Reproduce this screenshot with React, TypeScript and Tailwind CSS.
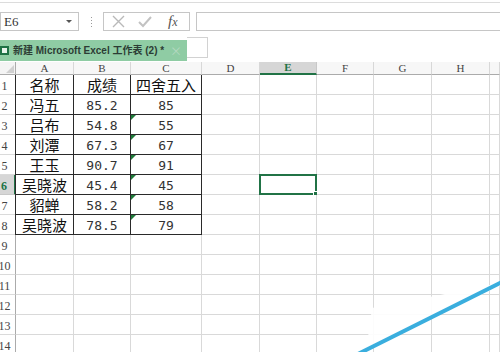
import React from 'react';

const letters = ['A', 'B', 'C', 'D', 'E', 'F', 'G', 'H', ''];

const data: string[][] = [
  ['名称', '成绩', '四舍五入'],
  ['冯五', '85.2', '85'],
  ['吕布', '54.8', '55'],
  ['刘潭', '67.3', '67'],
  ['王玉', '90.7', '91'],
  ['吴晓波', '45.4', '45'],
  ['貂蝉', '58.2', '58'],
  ['吴晓波', '78.5', '79'],
];

const cjk = { fontFamily: '"Noto Sans CJK SC", sans-serif' };
const mono = { fontFamily: '"DejaVu Sans Mono", monospace' };
const serif = { fontFamily: '"Liberation Serif", serif' };

const FormulaBar: React.FC = () => (
  <div className="flex items-stretch h-[19px]">
    <div className="w-[79px] border border-[#c6c6c6] flex items-center justify-between pl-[3px] pr-[6px] text-[13px] text-[#333]" style={serif}>
      <span>E6</span>
      <span className="w-0 h-0 border-l-[3px] border-r-[3px] border-t-[3px] border-l-transparent border-r-transparent border-t-[#555]" />
    </div>
    <div className="w-[24px] flex flex-col items-center justify-center gap-[2px]">
      <span className="w-[1px] h-[1px] bg-[#9a9a9a]" />
      <span className="w-[1px] h-[1px] bg-[#9a9a9a]" />
      <span className="w-[1px] h-[1px] bg-[#9a9a9a]" />
      <span className="w-[1px] h-[1px] bg-[#9a9a9a]" />
    </div>
    <div className="w-[87px] border border-[#c6c6c6] flex items-center pl-[8px] gap-[13px]">
      <svg width="13" height="13" viewBox="0 0 13 13">
        <path d="M1 1 L12 12 M12 1 L1 12" stroke="#b9b9b9" strokeWidth="1.4" />
      </svg>
      <svg width="14" height="12" viewBox="0 0 14 12">
        <path d="M1 6 L5 10 L13 1" stroke="#c2c2c2" strokeWidth="2" fill="none" />
      </svg>
      <span className="ml-[3px] italic text-[15px] text-[#555] leading-none" style={serif}>
        f<span className="text-[12px]">x</span>
      </span>
    </div>
    <div className="w-[6px]" />
    <div className="flex-1 border-t border-b border-l border-[#c6c6c6]" />
  </div>
);

const SheetTab: React.FC = () => (
  <div className="flex items-stretch h-[21px]">
    <div className="w-[187px] bg-[#8fcca4] flex items-center relative">
      <div className="w-[9px] h-[9px] bg-[#1e7145] flex items-center justify-center">
        <span className="w-[5px] h-[5px] bg-[#e8f4ec]" />
      </div>
      <span className="ml-[4px] text-[10px] font-bold text-[#2c3c34] whitespace-nowrap" style={{ fontFamily: '"Liberation Sans", "Noto Sans CJK SC", sans-serif' }}>
        新建 Microsoft Excel 工作表 (2) *
      </span>
      <span className="absolute right-[5px] top-[2px] text-[12px] text-[#b4d9c0]" style={cjk}>×</span>
    </div>
    <div className="w-[21px] mt-[-3px] mb-[3px] border border-[#d2d2d2] border-l-0 bg-white" />
  </div>
);

const Grid: React.FC = () => {
  const rows = Array.from({ length: 14 }, (_, i) => i + 1);
  return (
    <div className="grid grid-cols-[16px_58px_57px_71px_58px_57px_57px_58px_58px_1fr] grid-rows-[13px_repeat(14,20px)]">
      <div className="border-r border-b border-[#ababab] bg-[#f4f4f4] relative">
        <svg className="absolute right-[1px] bottom-[1px]" width="8" height="8" viewBox="0 0 8 8">
          <path d="M8 0 L8 8 L0 8 Z" fill="#d0d0d0" />
        </svg>
      </div>
      {letters.map((l, i) => (
        <div
          key={l + i}
          className={`flex items-center justify-center text-[11px] border-r ${
            l === 'E'
              ? 'bg-[#d6d6d6] text-[#217346] font-bold border-b-2 border-b-[#217346] border-r-[#c8c8c8]'
              : 'bg-[#f7f7f7] text-[#444] border-b border-b-[#ababab] border-r-[#d8d8d8]'
          }`}
          style={serif}
        >
          {l}
        </div>
      ))}
      {rows.map((r) => (
        <React.Fragment key={r}>
          <div
            className={`flex items-center justify-center pr-[6px] pt-[2px] text-[12px] border-b ${
              r === 6
                ? 'bg-[#d6d6d6] text-[#217346] font-bold border-r-2 border-r-[#217346] border-b-[#c8c8c8]'
                : 'bg-white text-[#444] border-r border-r-[#ababab] border-b-[#dadada]'
            }`}
            style={serif}
          >
            {r}
          </div>
          {letters.map((l, ci) => {
            const inTable = r <= 8 && ci <= 2;
            const val = inTable ? data[r - 1][ci] : '';
            const isNum = /[0-9]/.test(val);
            const selected = r === 6 && l === 'E';
            return (
              <div
                key={l + ci}
                className={`relative flex items-center justify-center pt-[2px] border-r border-b ${
                  inTable ? 'border-[#2a2a2a]' : 'border-[#d9d9d9]'
                } ${isNum ? 'text-[13px] text-[#333]' : 'text-[15px] text-[#111]'}`}
                style={isNum ? mono : cjk}
              >
                {val}
                {ci === 2 && r >= 3 && r <= 8 && (
                  <span className="absolute left-0 top-0 w-0 h-0 border-t-[5px] border-r-[5px] border-t-[#1f7a3a] border-r-transparent" />
                )}
                {ci === 0 && r <= 8 && <span className="absolute left-[-1px] top-0 bottom-[-1px] w-[1px] bg-[#2a2a2a]" />}
                {selected && (
                  <span className="absolute left-[-1px] top-[-1px] right-[-1px] bottom-[-1px] border-2 border-[#217346]">
                    <span className="absolute right-[-3px] bottom-[-3px] w-[5px] h-[5px] bg-[#217346] border border-white" />
                  </span>
                )}
              </div>
            );
          })}
        </React.Fragment>
      ))}
    </div>
  );
};

const App: React.FC = () => {
  return (
    <div className="w-[500px] h-[352px] overflow-hidden bg-white relative">
      <div className="h-[3px] border-b border-[#dcdcdc]" />
      <div className="h-[9px]" />
      <FormulaBar />
      <div className="h-[9px]" />
      <SheetTab />
      <div className="h-[1px]" />
      <Grid />
      <svg className="absolute left-0 top-0 pointer-events-none" width="500" height="352" viewBox="0 0 500 352">
        <polygon points="366,352 372,308 440,295 500,283 500,286 360,352" fill="#ffffff" opacity="0.92" />
        <line x1="502" y1="282" x2="358" y2="354" stroke="#3aaede" strokeWidth="4" />
      </svg>
    </div>
  );
};

export default App;
